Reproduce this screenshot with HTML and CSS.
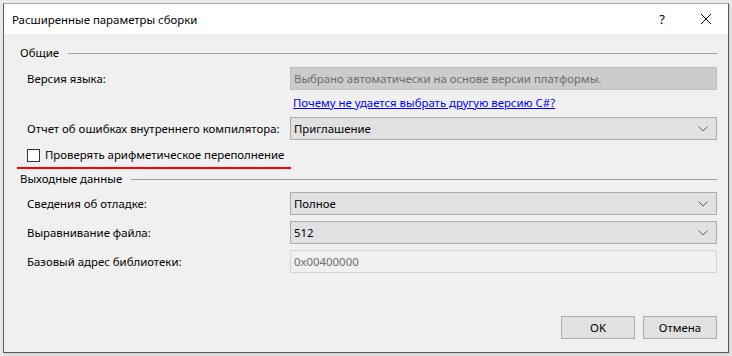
FILE: index.html
```html
<!DOCTYPE html>
<html lang="ru">
<head>
<meta charset="utf-8">
<title>Расширенные параметры сборки</title>
<link rel="stylesheet" href="styles.css">
</head>
<body>
<div class="window">
  <div class="titlebar">
    <span class="title">Расширенные параметры сборки</span>
    <span class="help">?</span>
    <span class="close"><svg width="12" height="12" viewBox="0 0 12 12"><path d="M1 1 L11 11 M11 1 L1 11" stroke="#000" stroke-width="1" fill="none"/></svg></span>
  </div>
  <div class="content">
    <div class="group-header g1"><span>Общие</span><div class="rule"></div></div>
    <div class="row r-lang">
      <span class="label">Версия языка:</span>
      <div class="combo disabled"><span class="val">Выбрано автоматически на основе версии платформы.</span><svg class="chev" width="10" height="6" viewBox="0 0 10 6"><path d="M0.5 0.5 L5 5 L9.5 0.5" stroke="#c4c4c4" fill="none"/></svg></div>
    </div>
    <div class="row r-link">
      <span class="label"></span>
      <a class="link" href="#">Почему не удается выбрать другую версию C#?</a>
    </div>
    <div class="row r-err">
      <span class="label">Отчет об ошибках внутреннего компилятора:</span>
      <div class="combo"><span class="val">Приглашение</span><svg class="chev" width="10" height="6" viewBox="0 0 10 6"><path d="M0.5 0.5 L5 5 L9.5 0.5" stroke="#606060" fill="none"/></svg></div>
    </div>
    <div class="check-row">
      <span class="box"></span>
      <span class="check-label">Проверять арифметическое переполнение</span>
    </div>
    <div class="red-line"></div>
    <div class="group-header g2"><span>Выходные данные</span><div class="rule"></div></div>
    <div class="row r-dbg">
      <span class="label">Сведения об отладке:</span>
      <div class="combo"><span class="val">Полное</span><svg class="chev" width="10" height="6" viewBox="0 0 10 6"><path d="M0.5 0.5 L5 5 L9.5 0.5" stroke="#606060" fill="none"/></svg></div>
    </div>
    <div class="row r-std">
      <span class="label">Выравнивание файла:</span>
      <div class="combo"><span class="val">512</span><svg class="chev" width="10" height="6" viewBox="0 0 10 6"><path d="M0.5 0.5 L5 5 L9.5 0.5" stroke="#606060" fill="none"/></svg></div>
    </div>
    <div class="row r-std">
      <span class="label">Базовый адрес библиотеки:</span>
      <div class="textbox"><span class="val">0x00400000</span></div>
    </div>
  </div>
  <div class="footer">
    <button class="btn">OK</button>
    <button class="btn">Отмена</button>
  </div>
</div>
</body>
</html>
```

FILE: styles.css
```css
* { box-sizing: border-box; }
html, body { margin: 0; padding: 0; }
body {
  width: 732px;
  height: 356px;
  background: #e9e9e9;
  font-family: "Noto Sans", "Open Sans", sans-serif;
  font-size: 11.4px;
  color: #000;
  padding: 3px 4px 3px 3px;
  overflow: hidden;
}
.window {
  width: 726px;
  height: 350px;
  background: #f0f0f0;
  border: 1px solid #5c5c5c;
  border-top-color: #a8a8a8;
  display: flex;
  flex-direction: column;
  box-shadow: 1px 1px 2px rgba(0,0,0,0.15);
}
.titlebar {
  height: 30px;
  background: #fff;
  display: flex;
  align-items: center;
  padding-left: 8px;
  flex: none;
}
.title { flex: 1; }
.help { width: 14px; margin-right: 31px; font-size: 13px; text-align: center; }
.close { width: 12px; height: 12px; margin-right: 16px; display: flex; }
.content {
  flex: 1;
  padding: 0 11px 0 0;
  display: flex;
  flex-direction: column;
}
.group-header {
  height: 16px;
  line-height: 16px;
  display: flex;
  align-items: center;
  padding-left: 16px;
  white-space: nowrap;
}
.group-header .rule { flex: 1; height: 1px; background: #a0a0a0; margin-left: 9px; }
.g1 { margin-top: 11px; }
.g2 { margin-top: 2px; }
.row {
  display: flex;
  align-items: center;
  padding-left: 23px;
}
.label { width: 263px; flex: none; line-height: 16px; white-space: nowrap; }
.r-lang { margin-top: 6px; height: 23px; }
.r-link { margin-top: 5px; height: 16px; }
.r-err { margin-top: 6px; height: 23px; }
.r-dbg { margin-top: 5px; height: 23px; }
.r-std { margin-top: 6px; height: 23px; }
.combo, .textbox {
  flex: 1;
  min-width: 0;
  height: 23px;
  border: 1px solid #adadad;
  background: #e1e1e1;
  display: flex;
  align-items: center;
  padding: 0 8px 0 3px;
  justify-content: space-between;
}
.val { white-space: nowrap; overflow: hidden; }
.combo.disabled { background: #cccccc; border-color: #bfbfbf; color: #6d6d6d; }
.textbox { background: #f0f0f0; border-color: #d4d4d4; color: #6d6d6d; }
.chev { flex: none; }
.link { color: #0000ff; text-decoration: underline; margin-left: 3px; line-height: 16px; white-space: nowrap; }
.check-row {
  margin-top: 7px;
  height: 16px;
  display: flex;
  align-items: center;
  padding-left: 23px;
}
.box { width: 13px; height: 13px; border: 1px solid #333; background: #fff; margin-right: 5px; flex: none; }
.check-label { line-height: 16px; white-space: nowrap; }
.red-line { margin-top: 4px; margin-left: 13px; width: 274px; height: 2px; background: #ff0000; }
.footer {
  flex: none;
  display: flex;
  justify-content: flex-end;
  gap: 8px;
  padding: 0 11px 13px 0;
}
.btn {
  width: 74px;
  height: 23px;
  background: #e1e1e1;
  border: 1px solid #adadad;
  font-family: inherit;
  font-size: 11.4px;
  color: #000;
  padding: 0;
}
```
